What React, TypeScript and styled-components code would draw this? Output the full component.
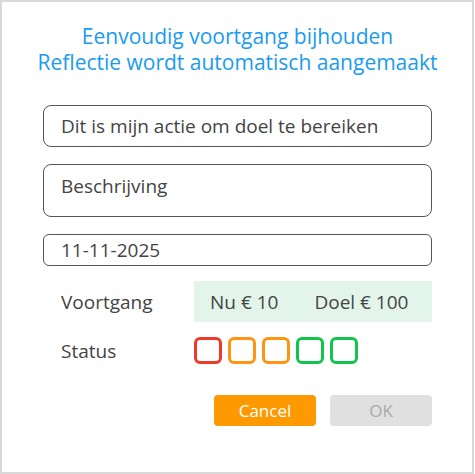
import styled, { createGlobalStyle } from "styled-components";

const GlobalStyle = createGlobalStyle`
  html, body {
    margin: 0;
    padding: 0;
    background: #ffffff;
  }
  body {
    font-family: "Open Sans", "Liberation Sans", sans-serif;
  }
`;

const Card = styled.div`
  box-sizing: border-box;
  width: 474px;
  height: 474px;
  border: 2px solid #d9d9d9;
  background: #fff;
  padding: 21px 40px 0 41px;
  display: flex;
  flex-direction: column;
`;

const Title = styled.div`
  color: #1a9bef;
  font-size: 21px;
  line-height: 26px;
  text-align: center;
  margin: 0 -30px 30px;
`;

const Field = styled.div<{ $height: number; $gap: number; $radius?: number }>`
  box-sizing: border-box;
  height: ${(p) => p.$height}px;
  border: 1px solid #555;
  border-radius: ${(p) => p.$radius ?? 8}px;
  padding: 0 17px;
  display: flex;
  align-items: ${(p) => (p.$height > 45 ? "flex-start" : "center")};
  padding-top: ${(p) => (p.$height > 45 ? "9px" : "0")};
  font-size: 19px;
  line-height: 24px;
  color: #444;
  margin-bottom: ${(p) => p.$gap}px;
`;

const Row = styled.div<{ $offset?: number }>`
  display: flex;
  align-items: center;
  padding-left: 18px;
  margin-top: ${(p) => p.$offset ?? 0}px;
`;

const Label = styled.div`
  width: 133px;
  font-size: 19px;
  line-height: 24px;
  color: #444;
`;

const Progress = styled.div`
  flex: 1;
  height: 41px;
  background: #e3f5ea;
  display: flex;
  align-items: center;
  gap: 36px;
  padding-left: 16px;
  font-size: 19px;
  color: #444;
`;

const Squares = styled.div`
  display: flex;
  gap: 6px;
`;

const Square = styled.div<{ $color: string }>`
  box-sizing: border-box;
  width: 28px;
  height: 27px;
  border: 3px solid ${(p) => p.$color};
  border-radius: 6px;
`;

const Buttons = styled.div`
  display: flex;
  justify-content: flex-end;
  gap: 14px;
  margin-top: 31px;
`;

const Button = styled.button<{ $primary?: boolean }>`
  width: 102px;
  height: 31px;
  border: none;
  border-radius: 4px;
  font-family: inherit;
  font-size: 17px;
  background: ${(p) => (p.$primary ? "#ff9900" : "#e0e0e0")};
  color: ${(p) => (p.$primary ? "#fff" : "#aaa")};
`;

const statusColors = ["#ee3a2c", "#ff9411", "#ff9411", "#10c44c", "#10c44c"];

export default function App() {
  return (
    <>
      <GlobalStyle />
      <Card>
        <Title>
          Eenvoudig voortgang bijhouden
          <br />
          Reflectie wordt automatisch aangemaakt
        </Title>
        <Field $height={42} $gap={17}>
          Dit is mijn actie om doel te bereiken
        </Field>
        <Field $height={53} $gap={17}>
          Beschrijving
        </Field>
        <Field $height={32} $gap={15} $radius={6}>
          11-11-2025
        </Field>
        <Row>
          <Label>Voortgang</Label>
          <Progress>
            <span>Nu € 10</span>
            <span>Doel € 100</span>
          </Progress>
        </Row>
        <Row $offset={15}>
          <Label>Status</Label>
          <Squares>
            {statusColors.map((c, i) => (
              <Square key={i} $color={c} />
            ))}
          </Squares>
        </Row>
        <Buttons>
          <Button $primary>Cancel</Button>
          <Button>OK</Button>
        </Buttons>
      </Card>
    </>
  );
}
